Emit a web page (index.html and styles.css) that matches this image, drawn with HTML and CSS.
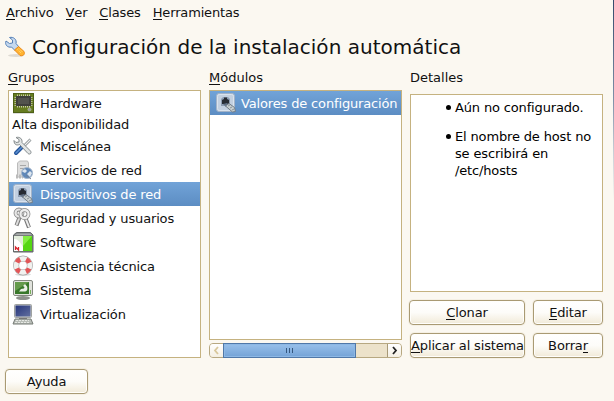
FILE: index.html
```html
<!DOCTYPE html>
<html lang="es">
<head>
<meta charset="utf-8">
<title>Configuración de la instalación automática</title>
<link rel="stylesheet" href="styles.css">
</head>
<body>
<svg width="0" height="0" class="defs">
  <defs>
    <linearGradient id="navy" x1="0" y1="0" x2="1" y2="1"><stop offset="0" stop-color="#26357c"/><stop offset="1" stop-color="#62709f"/></linearGradient>
    <symbol id="socket" viewBox="0 0 22 22">
      <rect x="1.5" y="1.5" width="18" height="18" rx="2.5" fill="#c3d0e0" stroke="#a3b3c8"/>
      <rect x="2.5" y="2.5" width="16" height="16" rx="2" fill="none" stroke="#d9e3ee"/>
      <path d="M6 14V7l2-2h5l2 2v7z" fill="#8d9db2"/>
      <path d="M7 12V8l2-1V5.500h3V7l2 1v4z" fill="#262b33"/>
      <path d="M8 12l4-1 2 2-3 2z" fill="#5f6f85"/>
      <path d="M10.500 14l3.500-2.500 5.500 4 1 4-3 .5z" fill="#c8cfd0" stroke="#727d87"/>
      <path d="M13 14l2-1M15 16l2-1M17 18l2-1" stroke="#8a949b"/>
    </symbol>
  </defs>
</svg>
<div class="window">
  <nav class="menu"><span><u>A</u>rchivo</span><span><u>V</u>er</span><span><u>C</u>lases</span><span><u>H</u>erramientas</span></nav>
  <header class="title">
    <svg width="22" height="22" viewBox="0 0 22 22">
      <ellipse cx="12" cy="19.500" rx="8" ry="1.500" fill="#dedbd4"/>
      <path d="M5.500 1.500l3 2.500v3l-3 .5-3.500-2.500C.5 8.500 3.500 12 7.500 11l3.500 3.500 4-3.500-3-3.500C13 3.500 9.500.5 5.500 1.500z" fill="#c5d9ef" stroke="#5580b7"/>
      <path d="M10.500 14l4-3.500 5.500 5c1.500 3-1.500 5-4 4z" fill="#ffb331" stroke="#ed8a16"/>
      <path d="M13.500 13.500l4 4M15 12.500l3.500 3.500" stroke="#ffe086" stroke-dasharray="1 1"/>
    </svg>
    <h1>Configuración de la instalación automática</h1>
  </header>
  <main class="columns">
    <section class="groups">
      <h2><u>G</u>rupos</h2>
      <ul class="list">
        <li><svg width="22" height="22" viewBox="0 0 22 22"><path d="M1 21.500h21" stroke="#ddd" /><rect x="1.500" y="1.500" width="20" height="19" fill="#667c20" stroke="#4d6117"/><path d="M5 3.500h13M5 14.500h13" stroke="#c9cab0" stroke-width="2" stroke-dasharray="1 1"/><path d="M3.500 5v9M19.500 5v9" stroke="#b4b798" stroke-width="2" stroke-dasharray="1 1"/><rect x="4" y="4" width="15" height="10" fill="#3f403b"/><rect x="6" y="6" width="11" height="6" fill="#52534d"/><circle cx="17.500" cy="17.500" r="1.600" fill="#999f91" stroke="#c5c9b8" stroke-width=".5"/></svg><span>Hardware</span></li>
        <li class="plain"><span>Alta disponibilidad</span></li>
        <li><svg width="22" height="22" viewBox="0 0 22 22"><path d="M18.500 4.500l-8 8" stroke="#777f82" stroke-width="2.600"/><path d="M18.500 4.500l-8 8" stroke="#eee" stroke-width="1.200"/><path d="M10 12l-6 6" stroke="#24559c" stroke-width="4" stroke-linecap="round"/><path d="M10 12l-6 6" stroke="#5b8fd0" stroke-width="1.500" stroke-linecap="round"/><path d="M4 2.500l3 2v2.500l-3 .5-2-2C2 10 5 10.500 7.500 9.500l8.500 9c2 1.500 4-.5 2.500-2.500L10 7.500C10.500 4 8 1.500 4 2.500z" fill="#e2e5e5" stroke="#858c8e"/></svg><span>Miscelánea</span></li>
        <li><svg width="22" height="22" viewBox="0 0 22 22"><path d="M5.500 4l2-2h8l1 2v14h-11z" fill="#dedede" stroke="#bbb"/><path d="M8 6.500h6M8 9.500h4" stroke="#a7a7a7"/><path d="M4 17.500h7" stroke="#bbb" stroke-width="4" stroke-dasharray="2 1"/><circle cx="15" cy="14" r="5.500" fill="#6088b8" stroke="#a7b8cc"/><path d="M10 12l3-2 2 2-2 2-2-1zM15 15l3-3 2 2-2 4z" fill="#dde6ef"/><path d="M14 16l5 4" stroke="#748295"/></svg><span>Servicios de red</span></li>
        <li class="selected"><svg width="22" height="22"><use href="#socket"/></svg><span>Dispositivos de red</span></li>
        <li><svg width="22" height="22" viewBox="0 0 22 22" fill="none"><path d="M8 9L4.500 18.500" stroke="#7c7c7c" stroke-width="4"/><path d="M8 9L4.500 18" stroke="#ddd" stroke-width="2"/><path d="M13 10l4 10.500" stroke="#777" stroke-width="4"/><path d="M13 10l4 10" stroke="#eee" stroke-width="2"/><circle cx="7" cy="6" r="3.500" stroke="#888" stroke-width="3.800"/><circle cx="7" cy="6" r="3.500" stroke="#e7e7e7" stroke-width="2.200"/><circle cx="12.500" cy="7" r="4" stroke="#888" stroke-width="3.800"/><circle cx="12.500" cy="7" r="4" stroke="#ededed" stroke-width="2.300"/></svg><span>Seguridad y usuarios</span></li>
        <li><svg width="22" height="22" viewBox="0 0 22 22"><path d="M1.500 4l3-2.500h14l2.500 2.500v17H1.500z" fill="#777c7d" stroke="#626768"/><path d="M3 4l2-1.500h13L20 4z" fill="#a9adad"/><path d="M2 5h9v15H2z" fill="#fff"/><path d="M2 5h9v11c-3-5-5-8-9-8z" fill="#e3eddd"/><path d="M11 5h9v15h-9z" fill="#55d613"/><path d="M11 5h9L11 15z" fill="#83ed42"/><path d="M3.500 19v-3l3 3v-3" fill="none" stroke="#d8252c" stroke-width="1.300"/></svg><span>Software</span></li>
        <li><svg width="22" height="22" viewBox="0 0 22 22" fill="none"><ellipse cx="11" cy="19.500" rx="8" ry="1.500" fill="#ddd"/><circle cx="11" cy="10.500" r="6.900" stroke="#a5a5a5" stroke-width="6"/><circle cx="11" cy="10.500" r="6.900" stroke="#f1f1ef" stroke-width="4.800"/><circle cx="11" cy="10.500" r="6.900" stroke="#e25658" stroke-width="4.800" stroke-dasharray="4.600 6.238" stroke-dashoffset="-3.100"/></svg><span>Asistencia técnica</span></li>
        <li><svg width="22" height="22" viewBox="0 0 22 22"><ellipse cx="11" cy="19" rx="7" ry="2" fill="#8e918c"/><rect x="1.500" y="1.500" width="19" height="15" rx="1.500" fill="#e1e3dd" stroke="#858981"/><path d="M3 3h14v12H3z" fill="#39782b"/><path d="M3 3h14L3 12z" fill="#659a4c"/><path d="M7 12.500h5c3 0 4-2 3-5l-2-2.500-2 2 1.500 1-.5 1.500-3 .5z" fill="#ecf0e8"/><path d="M18.500 11v4" stroke="#78af5b"/></svg><span>Sistema</span></li>
        <li><svg width="22" height="22" viewBox="0 0 22 22"><path d="M3 16h16l2 5H1z" fill="#b9beb8" stroke="#777c77"/><path d="M4 17.500h13M3 19.500h14" stroke="#e6e8e4" stroke-dasharray="2 1"/><path d="M7 14h8v2H7z" fill="#777"/><rect x="2.500" y="1.500" width="17" height="13" rx="1" fill="#cfd1ce" stroke="#a0a3a1"/><rect x="3.500" y="2.500" width="15" height="11" fill="url(#navy)"/></svg><span>Virtualización</span></li>
      </ul>
    </section>
    <section class="modules">
      <h2><u>M</u>ódulos</h2>
      <ul class="list">
        <li class="selected"><svg width="22" height="22"><use href="#socket"/></svg><span>Valores de configuración</span></li>
      </ul>
      <div class="scroll">
        <div class="arrow off"><svg width="13" height="13" viewBox="0 0 13 13"><path d="M8 3L5 6.500 8 10"/></svg></div>
        <div class="thumb"><i></i><i></i><i></i></div>
        <div class="arrow end"><svg width="13" height="13" viewBox="0 0 13 13"><path d="M5 3l3 3.500L5 10"/></svg></div>
      </div>
    </section>
    <section class="details">
      <h2>Detalles</h2>
      <div class="info">
        <ul>
          <li><span>Aún no configurado.</span></li>
          <li><span>El nombre de host no</span><br><span>se escribirá en</span><br><span>/etc/hosts</span></li>
        </ul>
      </div>
      <div class="actions">
        <button class="clone"><span><u>C</u>lonar</span></button><button><span><u>E</u>ditar</span></button>
        <button><span><u>A</u>plicar al sistema</span></button><button><span>Borra<u>r</u></span></button>
      </div>
    </section>
  </main>
  <button class="help"><span>Ayuda</span></button>
</div>
</body>
</html>
```
FILE: styles.css
```css
* { box-sizing: border-box; }
body { margin: 0; background: #fbf8f1; color: #111; font: 13px/16px "DejaVu Sans", sans-serif; letter-spacing: -0.15px; overflow: hidden; }
.defs { display: block; }
.window { width: 614px; height: 401px; border-right: 1px solid; border-image: linear-gradient(#344a6b, #8090a8 25%, #c9ced6 38%, #fbf8f1 50%) 1; }
u { text-decoration: none; border-bottom: 1px solid #111; display: inline-block; height: 15px; }
span { white-space: nowrap; }
.menu { display: flex; gap: 12px; padding: 5px 0 0 6px; height: 35px; }
.title { display: flex; align-items: center; height: 24px; padding-left: 4px; gap: 6px; }
h1 { margin: 0; font-size: 20px; line-height: 24px; font-weight: 400; white-space: nowrap; letter-spacing: 0.02px; }
h2 { margin: 0; font: inherit; letter-spacing: 0; height: 20px; }
.columns { display: grid; grid-template-columns: 193px 193px 194px; column-gap: 8px; padding: 11px 0 0 8px; height: 299px; }
ul { list-style: none; margin: 0; padding: 0; }
.list { background: #fff; border: 1px solid #c5b280; height: 268px; }
.list li { display: flex; align-items: center; height: 24px; padding: 0 0 0 3px; gap: 6px; }
.list li span { padding-top: 2px; }
.list .plain { height: 19px; }
.list .plain span { padding-top: 0; }
.list svg { flex: none; }
.list .selected { background: linear-gradient(#71a3d8, #5c8dc3); color: #fff; }
.modules .list { height: 250px; margin-bottom: 3px; }
.modules .list li { padding-left: 5px; gap: 4px; }
.scroll { display: flex; height: 15px; border: 1px solid #b7a881; border-radius: 4px; background: #ece2ca; }
.arrow { width: 14px; background: linear-gradient(#fff, #f4efe3); border-radius: 3px 0 0 3px; }
.arrow svg { display: block; fill: none; stroke: #222; stroke-width: 1.8; }
.arrow.off svg { stroke: #d8c79b; }
.arrow.end { margin-left: auto; border-left: 1px solid #a79976; border-radius: 0 3px 3px 0; }
.thumb { width: 133px; margin: -1px 0 -1px -1px; border: 1px solid #5078a8; background: linear-gradient(#98c0ea, #74a3d7); box-shadow: inset 0 0 0 1px #8db8e5; display: flex; align-items: center; justify-content: center; gap: 2px; }
.thumb i { width: 1px; height: 5px; background: #34577f; }
.info { margin: 4px 0 8px; height: 198px; width: 193px; background: #fff; border: 1px solid #c5b280; padding: 4px 0 0 44px; color: #000; }
.info li { line-height: 17px; margin-bottom: 12px; position: relative; }
.info li::before { content: ""; position: absolute; left: -9px; top: 6px; width: 5px; height: 5px; border-radius: 50%; background: #000; }
.actions { display: grid; grid-template-columns: 115px 70px; gap: 8px; }
button { height: 25px; padding: 0; border: 1px solid #a99a73; border-radius: 4px; background: linear-gradient(#fff 0%, #fdfcf9 50%, #f1ead8); font: inherit; letter-spacing: inherit; color: #111; box-shadow: inset 0 0 0 1px #fffefb, 0 0 0 1px #f5f0e4; display: flex; align-items: center; justify-content: center; }
.clone { margin-left: -1px; }
.help { width: 83px; margin: 11px 0 0 5px; }
```
